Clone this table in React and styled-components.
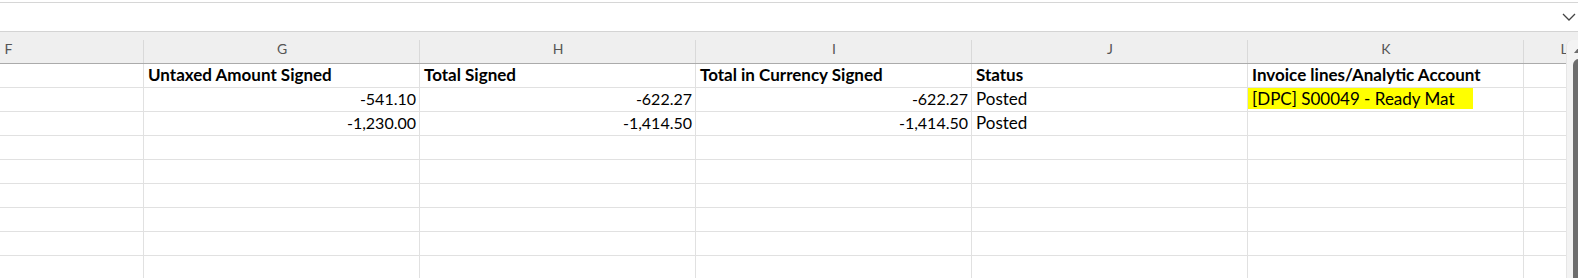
import React from 'react';
import styled, { createGlobalStyle } from 'styled-components';

const GlobalStyle = createGlobalStyle`
  html, body {
    margin: 0;
    padding: 0;
    background: #ffffff;
    overflow: hidden;
  }
  body {
    font-family: Lato, "Liberation Sans", sans-serif;
  }
`;

const Page = styled.div`
  width: 1578px;
  height: 278px;
  overflow: hidden;
  background: #ffffff;
`;

const FormulaBar = styled.div`
  height: 28px;
  margin-top: 2px;
  border-top: 1px solid #d6d6d6;
  border-bottom: 1px solid #d4d4d4;
  display: flex;
  align-items: center;
  justify-content: flex-end;
  padding-right: 2px;
`;

const SheetArea = styled.div`
  display: flex;
  align-items: stretch;
`;

const GridViewport = styled.div`
  width: 1566px;
  flex: none;
  overflow: hidden;
`;

const Grid = styled.div`
  display: grid;
  grid-template-columns: 271px 276px 276px 276px 276px 276px 80px;
  margin-left: -127px;
`;

const ColHeader = styled.div`
  position: relative;
  background: #efefef;
  border-bottom: 1px solid #ababab;
  box-sizing: border-box;
  height: 32px;
  display: flex;
  align-items: flex-end;
  justify-content: center;
  padding-bottom: 5px;
  font-family: Lato, "Liberation Sans", sans-serif;
  font-size: 14px;
  line-height: 18px;
  color: #555555;

  &::after {
    content: '';
    position: absolute;
    right: 0;
    top: 8px;
    bottom: 0;
    width: 1px;
    background: #d9d9d9;
  }
`;

const Cell = styled.div`
  height: 24px;
  box-sizing: border-box;
  border-right: 1px solid #e1e1e1;
  border-bottom: 1px solid #e1e1e1;
  display: flex;
  align-items: flex-end;
  justify-content: ${p => (p.$num ? 'flex-end' : 'flex-start')};
  padding: 0 ${p => (p.$num ? '3px' : '4px')} 2px;
  font-size: ${p => (p.$num ? '16px' : '17px')};
  line-height: 20px;
  font-weight: ${p => (p.$bold ? 700 : 400)};
  color: #000000;
  white-space: nowrap;
  overflow: hidden;
`;

const Highlight = styled.span`
  background: #ffff00;
  margin-left: -4px;
  padding: 0 18px 0 4px;
  line-height: 21px;
`;

const ScrollColumn = styled.div`
  width: 20px;
  flex: none;
  background: #efefef;
  padding-top: 8px;
  height: 246px;
  box-sizing: border-box;
`;

const ScrollTrack = styled.div`
  height: 100%;
  background: #f3f3f3;
  border-top-left-radius: 6px;
  border-left: 1px solid #e6e6e6;
  padding: 7px 0 0 6px;
  box-sizing: border-box;
`;

const ScrollThumb = styled.div`
  margin-top: 6px;
  width: 12px;
  height: 300px;
  background: #6d6d6d;
  border-radius: 6px 6px 0 0;
`;

const ArrowUp = styled.div`
  width: 0;
  height: 0;
  margin-left: 1px;
  border-left: 5px solid transparent;
  border-right: 5px solid transparent;
  border-bottom: 6px solid #6d6d6d;
`;

const columns = ['F', 'G', 'H', 'I', 'J', 'K', 'L'];

const rows = [
  [
    { text: '' },
    { text: 'Untaxed Amount Signed', bold: true },
    { text: 'Total Signed', bold: true },
    { text: 'Total in Currency Signed', bold: true },
    { text: 'Status', bold: true },
    { text: 'Invoice lines/Analytic Account', bold: true },
    { text: '' },
  ],
  [
    { text: '' },
    { text: '-541.10', num: true },
    { text: '-622.27', num: true },
    { text: '-622.27', num: true },
    { text: 'Posted' },
    { text: '[DPC] S00049 - Ready Mat', mark: true },
    { text: '' },
  ],
  [
    { text: '' },
    { text: '-1,230.00', num: true },
    { text: '-1,414.50', num: true },
    { text: '-1,414.50', num: true },
    { text: 'Posted' },
    { text: '' },
    { text: '' },
  ],
];

const emptyRows = 6;

const Chevron = () => (
  <svg width="14" height="8" viewBox="0 0 14 8">
    <path d="M1 1 L7 7 L13 1" fill="none" stroke="#444" strokeWidth="1.3" />
  </svg>
);

export default function App() {
  const allRows = [
    ...rows,
    ...Array.from({ length: emptyRows }, () => columns.map(() => ({ text: '' }))),
  ];

  return (
    <Page>
      <GlobalStyle />
      <FormulaBar>
        <Chevron />
      </FormulaBar>
      <SheetArea>
        <GridViewport>
          <Grid>
            {columns.map(c => (
              <ColHeader key={c}>{c}</ColHeader>
            ))}
            {allRows.map((row, r) =>
              row.map((cell, c) => (
                <Cell key={`${r}-${c}`} $num={cell.num} $bold={cell.bold}>
                  {cell.mark ? <Highlight>{cell.text}</Highlight> : cell.text}
                </Cell>
              ))
            )}
          </Grid>
        </GridViewport>
        <ScrollColumn>
          <ScrollTrack>
            <ArrowUp />
            <ScrollThumb />
          </ScrollTrack>
        </ScrollColumn>
      </SheetArea>
    </Page>
  );
}
